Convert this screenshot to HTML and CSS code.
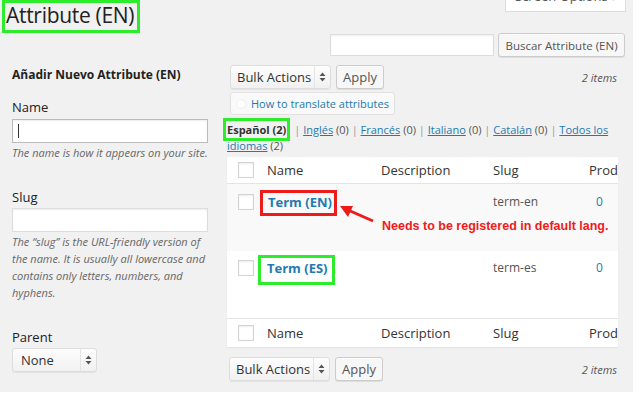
FILE: index.html
```html
<!DOCTYPE html>
<html lang="es">
<head>
  <meta charset="UTF-8" />
  <title>Attribute (EN)</title>
  <link rel="stylesheet" href="styles.css">
</head>
<body>
  <div class="page">
    <div class="screen-tab">Screen Options <span class="tab-caret">&#9662;</span></div>

    <div class="head">
      <h1 class="title">Attribute (EN)</h1>
    </div>

    <div class="search-row">
      <div class="field search-field"></div>
      <button class="btn btn-search">Buscar Attribute (EN)</button>
    </div>

    <div class="cols">
      <div class="col-left">
        <h2 class="form-title">Añadir Nuevo Attribute (EN)</h2>

        <label class="label label-name">Name</label>
        <div class="field field-focus"><span class="cursor"></span></div>
        <p class="desc">The name is how it appears on your site.</p>

        <label class="label label-gap">Slug</label>
        <div class="field"></div>
        <p class="desc">The “slug” is the URL-friendly version of the name. It is usually all lowercase and contains only letters, numbers, and hyphens.</p>

        <label class="label label-gap">Parent</label>
        <div class="select select-parent">
          <span class="select-text">None</span>
          <span class="select-arrows">
            <svg width="7" height="10" viewBox="0 0 7 10"><path d="M3.5 0.5 L6.5 4 L0.5 4 Z M3.5 9.5 L6.5 6 L0.5 6 Z" fill="#555"/></svg>
          </span>
        </div>
      </div>

      <div class="col-right">
        <div class="nav-row">
          <div class="select select-bulk">
            <span class="select-text">Bulk Actions</span>
            <span class="select-arrows">
              <svg width="7" height="10" viewBox="0 0 7 10"><path d="M3.5 0.5 L6.5 4 L0.5 4 Z M3.5 9.5 L6.5 6 L0.5 6 Z" fill="#555"/></svg>
            </span>
          </div>
          <button class="btn btn-apply">Apply</button>
          <span class="count">2 items</span>
        </div>

        <div class="help-btn">
          <span class="help-icon"></span>
          <span class="help-text">How to translate attributes</span>
        </div>

        <p class="langs">
          <span class="lang-current">Español (2)</span><span class="sep sep-first">|</span>
          <a class="lang-link">Inglés</a> <span class="num">(0)</span> <span class="sep">|</span>
          <a class="lang-link">Francés</a> <span class="num">(0)</span> <span class="sep">|</span>
          <a class="lang-link">Italiano</a> <span class="num">(0)</span> <span class="sep">|</span>
          <a class="lang-link">Catalán</a> <span class="num">(0)</span> <span class="sep">|</span>
          <a class="lang-link">Todos los idiomas</a> <span class="num">(2)</span>
        </p>

        <div class="table">
          <div class="row row-head">
            <div class="cell cell-check"><span class="check"></span></div>
            <div class="cell">Name</div>
            <div class="cell">Description</div>
            <div class="cell">Slug</div>
            <div class="cell">Products</div>
          </div>
          <div class="row row-term row-alt">
            <div class="cell cell-check"><span class="check"></span></div>
            <div class="cell"><a class="term term-red">Term (EN)</a></div>
            <div class="cell"></div>
            <div class="cell slug">term-en</div>
            <div class="cell slug count-link">0</div>
          </div>
          <div class="row row-term row-second">
            <div class="cell cell-check"><span class="check"></span></div>
            <div class="cell"><a class="term term-green">Term (ES)</a></div>
            <div class="cell"></div>
            <div class="cell slug">term-es</div>
            <div class="cell slug count-link">0</div>
          </div>
          <div class="row row-foot">
            <div class="cell cell-check"><span class="check"></span></div>
            <div class="cell">Name</div>
            <div class="cell">Description</div>
            <div class="cell">Slug</div>
            <div class="cell">Products</div>
          </div>
        </div>

        <div class="nav-row nav-bottom">
          <div class="select select-bulk">
            <span class="select-text">Bulk Actions</span>
            <span class="select-arrows">
              <svg width="7" height="10" viewBox="0 0 7 10"><path d="M3.5 0.5 L6.5 4 L0.5 4 Z M3.5 9.5 L6.5 6 L0.5 6 Z" fill="#555"/></svg>
            </span>
          </div>
          <button class="btn btn-apply">Apply</button>
          <span class="count">2 items</span>
        </div>
      </div>
    </div>

    <!-- annotation drawn over the table -->
    <svg class="arrow" width="40" height="26" viewBox="336 200 40 26">
      <line x1="373" y1="221" x2="348" y2="210" stroke="#ee1b1b" stroke-width="3"/>
      <polygon points="340,206 353,206 348,217" fill="#ee1b1b"/>
    </svg>
    <div class="note">Needs to be registered in default lang.</div>
  </div>
</body>
</html>
```

FILE: styles.css
```css
* {
  margin: 0;
  padding: 0;
  box-sizing: border-box;
}
body {
  background: #fff;
  font-family: "Open Sans", sans-serif;
  color: #444;
}
.page {
  position: relative;
  width: 633px;
  height: 392px;
  background: #f1f1f1;
  overflow: hidden;
}

/* Screen options tab, only its lower edge shows */
.screen-tab {
  position: absolute;
  left: 505px;
  top: -14px;
  width: 121px;
  height: 26px;
  background: #fff;
  border: 1px solid #ddd;
  border-top: none;
  font-size: 13px;
  line-height: 20px;
  color: #555;
  text-align: center;
}
.tab-caret {
  color: #aaa;
  font-size: 9px;
}

.head {
  display: flex;
}
.title {
  margin-left: 2px;
  border: 3px solid #2cec2c;
  padding: 0 3px 2px 1px;
  font-size: 21px;
  letter-spacing: -0.3px;
  font-weight: 400;
  line-height: 25px;
  color: #222;
}

.search-row {
  display: flex;
  justify-content: flex-end;
  align-items: center;
  gap: 4px;
  padding-right: 8px;
}
.field {
  height: 24px;
  background: #fff;
  border: 1px solid #ddd;
  box-shadow: inset 0 1px 2px rgba(0,0,0,0.07);
  position: relative;
}
.search-field {
  width: 164px;
  height: 22px;
}
.field-focus {
  border-color: #bbb;
}
.cursor {
  position: absolute;
  left: 5px;
  top: 4px;
  width: 1px;
  height: 14px;
  background: #333;
}

.btn {
  height: 24px;
  padding: 0 9px;
  font-family: "Open Sans", sans-serif;
  font-size: 12px;
  color: #555;
  background: #f7f7f7;
  border: 1px solid #ccc;
  border-radius: 3px;
  box-shadow: inset 0 1px 0 #fff, 0 1px 0 rgba(0,0,0,0.08);
}
.btn-search {
  width: 127px;
  padding: 0;
  font-size: 11.5px;
}

.cols {
  display: flex;
  margin-top: 6px;
}

/* left form column */
.col-left {
  width: 208px;
  padding-left: 12px;
}
.form-title {
  margin-top: 3px;
  font-size: 12px;
  font-weight: 700;
  line-height: 18px;
  color: #222;
}
.label {
  display: block;
  font-size: 13px;
  line-height: 18px;
  color: #222;
}
.label-name {
  margin-top: 14px;
  margin-bottom: 3px;
}
.label-gap {
  margin-top: 27px;
  margin-bottom: 2px;
}
.desc {
  margin-top: 1px;
  font-size: 11px;
  font-style: italic;
  line-height: 17px;
  color: #666;
}

.select {
  display: flex;
  height: 24px;
  background: linear-gradient(#fdfdfd, #f1f1f1);
  border: 1px solid #ddd;
  border-radius: 3px;
  box-shadow: 0 1px 0 rgba(0,0,0,0.06);
  font-size: 13px;
  color: #333;
}
.select-text {
  flex: 1;
  line-height: 22px;
  padding-left: 6px;
}
.select-arrows {
  width: 16px;
  border-left: 1px solid #e4e4e4;
  display: flex;
  align-items: center;
  justify-content: center;
}
.select-parent {
  width: 85px;
}
.select-parent .select-text {
  padding-left: 8px;
}

/* right list column */
.col-right {
  margin-left: 19px;
  width: 391px;
}
.nav-row {
  display: flex;
  align-items: center;
  gap: 5px;
  margin-top: 2px;
  padding-left: 3px;
}
.select-bulk {
  width: 101px;
}
.btn-apply {
  width: 48px;
  padding: 0;
  font-size: 13px;
}
.count {
  margin-left: auto;
  font-size: 11px;
  font-style: italic;
  color: #555;
  padding-right: 1px;
}

.help-btn {
  display: flex;
  align-items: center;
  width: 165px;
  height: 23px;
  margin-top: 3px;
  margin-left: 3px;
  background: #f9f9f9;
  border: 1px solid #e2e2e2;
  border-radius: 3px;
}
.help-icon {
  width: 10px;
  height: 10px;
  margin-left: 5px;
  border-radius: 50%;
  background: #fff;
  border: 1px solid #f0f0f0;
}
.help-text {
  margin-left: 5px;
  font-size: 11px;
  white-space: nowrap;
  color: #1e7ab0;
}

.langs {
  margin-top: 7px;
  font-size: 11px;
  line-height: 16px;
  color: #555;
}
.lang-current {
  font-weight: 700;
  color: #333;
  outline: 3px solid #2cec2c;
  outline-offset: 1px;
}
.sep {
  color: #999;
}
.sep-first {
  margin-left: 8px;
  margin-right: 0;
}
.lang-link {
  color: #1e7ab0;
  text-decoration: underline;
}

.table {
  margin-top: 3px;
  background: #fff;
  box-shadow: 0 1px 1px rgba(0,0,0,0.05);
  overflow: hidden;
}
.row {
  display: grid;
  grid-template-columns: 31px 114px 112px 96px 1fr;
  font-size: 13px;
  color: #333;
  white-space: nowrap;
}
.row-head {
  height: 27px;
  align-items: center;
  border-bottom: 1px solid #e4e4e4;
}
.row-foot {
  height: 29px;
  align-items: center;
  border-top: 1px solid #e4e4e4;
}
.row-term {
  height: 67px;
  align-items: start;
}
.row-alt {
  background: #f9f9f9;
}
.cell {
  padding-left: 9px;
  overflow: hidden;
}
.cell-check {
  padding-left: 11px;
  display: flex;
}
.check {
  width: 16px;
  height: 16px;
  border: 1px solid #d4d4d4;
  background: #fff;
  box-shadow: inset 0 1px 2px rgba(0,0,0,0.08);
}
.row-term .cell-check {
  padding-top: 10px;
}
.row-second .cell-check {
  padding-top: 9px;
}
.term {
  display: inline-block;
  font-weight: 700;
  font-size: 13px;
  line-height: 18px;
  color: #1e7ab0;
  margin-left: -7px;
}
.term-red {
  margin-top: 6px;
  border: 3px solid #ee1b1b;
  padding: 0 2px 2px 5px;
}
.term-green {
  margin-top: 4px;
  border: 3px solid #2cec2c;
  padding: 1px 4px 5px 6px;
  margin-left: -9px;
}
.slug {
  font-size: 12px;
  line-height: 18px;
  color: #555;
  padding-top: 9px;
}
.row-second .slug {
  padding-top: 8px;
}
.count-link {
  color: #1e7ab0;
  padding-left: 16px;
}

.nav-bottom {
  margin-top: 10px;
  padding-left: 2px;
}

/* annotation */
.arrow {
  position: absolute;
  left: 336px;
  top: 200px;
}
.note {
  position: absolute;
  left: 382px;
  top: 218px;
  font-family: "Liberation Sans", Arial, sans-serif;
  font-size: 12.5px;
  font-weight: 700;
  line-height: 16px;
  color: #ee1b1b;
}
```
